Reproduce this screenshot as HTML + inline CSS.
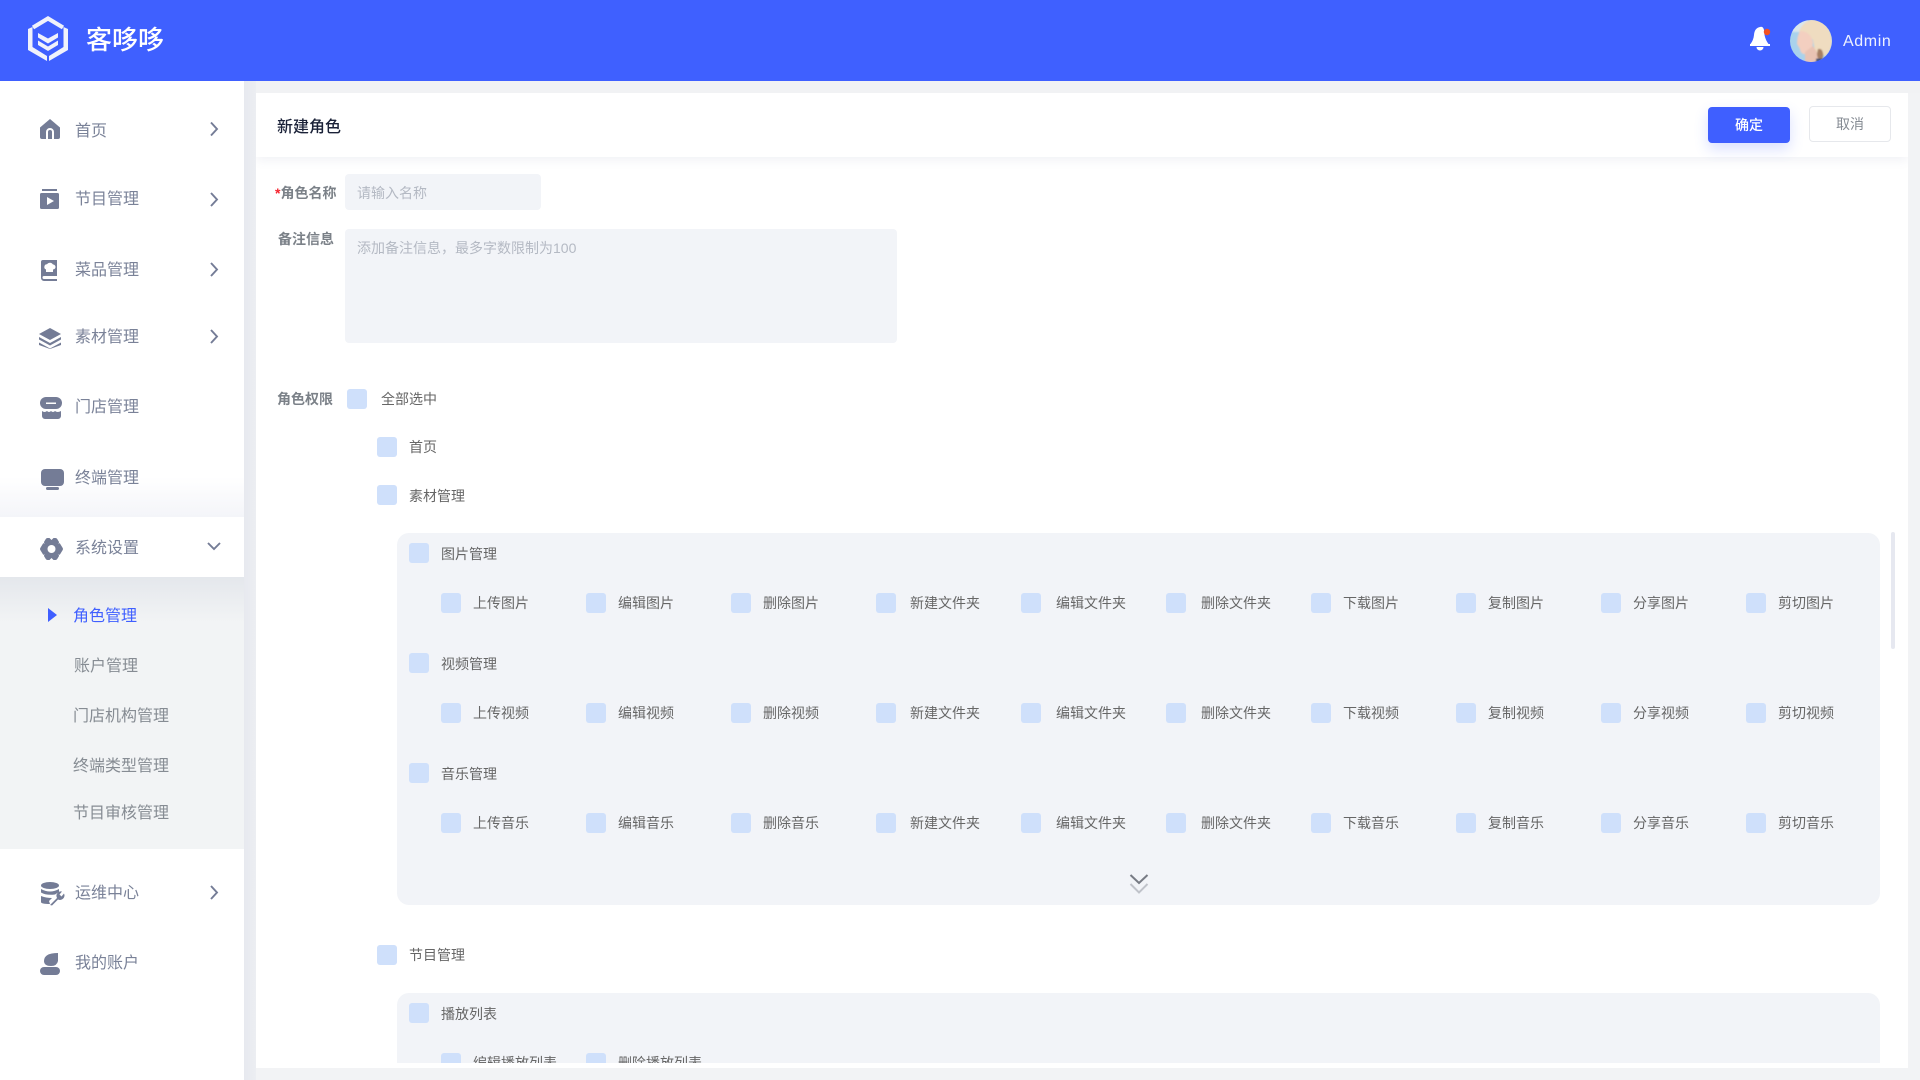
<!DOCTYPE html>
<html lang="zh-CN"><head><meta charset="utf-8"><title>新建角色</title>
<style>
*{box-sizing:border-box;margin:0;padding:0}
html,body{width:1920px;height:1080px;overflow:hidden;background:#f2f3f5;font-family:"Liberation Sans","Noto Sans CJK SC",sans-serif;font-size:14px;color:#666}
.a{position:absolute}
#hd{left:0;top:0;width:1920px;height:81px;background:#3f60ff;z-index:5}
#side{left:0;top:81px;width:244px;height:999px;background:#fff;z-index:3;overflow:hidden}
#strip{left:244px;top:81px;width:12px;height:999px;background:linear-gradient(90deg,#e7e9ef,#eceef2);z-index:1}
#topstrip{left:256px;top:81px;width:1664px;height:12px;background:#f1f2f4}
#card{left:256px;top:93px;width:1652px;height:975px;background:#fff;overflow:hidden;z-index:2}
#tb{left:0;top:0;width:1652px;height:64px;background:#fff;box-shadow:0 3px 10px rgba(90,100,140,.09)}
.nav{position:absolute;left:75px;font-size:16px;line-height:24px;color:#7a8298;white-space:nowrap}
.sub{position:absolute;left:73px;font-size:16px;line-height:24px;color:#868c93;white-space:nowrap}
.ic{position:absolute;left:0;top:0;overflow:visible}
.cb{display:block;position:absolute;width:20px;height:20px;background:#cfe0fb;border-radius:3px}
.t{position:absolute;line-height:20px;white-space:nowrap;color:#666}
.lb{position:absolute;line-height:20px;font-weight:700;color:#7b8188;white-space:nowrap}
.p{position:absolute;background:#f2f4f8;border-radius:12px}
.r{position:absolute;left:44px;display:flex;height:20px}
.r div{position:relative;width:145px;height:20px;flex:none}
.r i{display:block;width:20px;height:20px;background:#cfe0fb;border-radius:3px}
.r span{position:absolute;left:32px;top:0;line-height:20px;white-space:nowrap;color:#666}
.r span.f1{left:34px}
.r span.f2{left:35px}
</style></head><body>

<div id="hd" class="a">
<svg class="ic" width="1920" height="81">
<path d="M33 27.500 L48 18.500 L63 27.500" fill="none" stroke="#f0f2fb" stroke-width="4.200"/>
<path d="M28 29 L32.500 27 V47 L47 56 V61 L28 50Z M68 29 L63.500 27 V47 L49 56 V61 L68 50Z" fill="#f0f2fb"/>
<path d="M38 33 L48 38.500 L58 33 V37.500 L48 43.500 L38 37.500Z M38 40.500 L48 46.500 L58 40.500 V45 L48 51 L38 45Z" fill="#f0f2fb"/>
<path d="M1760 27 q3 -1 4 3 l.5 5 q1 5 4 9 H1750.500 q3 -4 3.500 -9 q.5 -7 6 -8Z" fill="#fff"/>
<rect x="1750" y="44" width="20" height="2" fill="#fff"/>
<path d="M1756.500 47 h7 a3.500 3.500 0 0 1 -7 0Z" fill="#fff"/>
<circle cx="1767" cy="32" r="3.200" fill="#f4511e"/>
<defs>
<clipPath id="av"><circle cx="1811" cy="41" r="21"/></clipPath>
<filter id="bl" x="-10%" y="-10%" width="120%" height="120%"><feGaussianBlur stdDeviation=".7"/></filter>
</defs>
<g clip-path="url(#av)">
<rect x="1790" y="20" width="42" height="42" fill="#a9d2ec"/>
<g filter="url(#bl)">
<rect x="1790" y="20" width="18" height="12" fill="#d9e6ec"/>
<path d="M1799 31 Q1804 20 1815 19 Q1831 23 1832 42 Q1831 52 1825 56 L1815 52 L1813 40 Q1806 32 1799 31Z" fill="#efdcc0"/>
<path d="M1800 31 Q1810 31 1813 42 Q1813 50 1808 54 L1803 54 Q1800 52 1800 49 L1797 44 Q1797 36 1800 31Z" fill="#f3cfc0"/>
<path d="M1805 52 L1813 46 L1818 54 L1820 63 H1805Z" fill="#e9c3b4"/>
<path d="M1818 49 q4 -1 5 4 q1 4 -2 7 q-4 -1 -4 -6Z" fill="#a67f64"/>
<rect x="1816" y="58.500" width="10" height="5" fill="#36517e"/>
</g>
</g>
</svg>
<div class="a" style="left:86px;top:22px;font-size:26px;line-height:36px;font-weight:500;color:#fff;white-space:nowrap">客哆哆</div>
<div class="a" style="left:1843px;top:30px;font-size:16px;line-height:24px;letter-spacing:.6px;color:#eef1ff;white-space:nowrap">Admin</div>
</div>

<div id="strip" class="a"></div>
<div id="topstrip" class="a"></div>

<div id="side" class="a">
<div class="a" style="left:0;top:396px;width:244px;height:40px;background:linear-gradient(180deg,#fff,#f4f5f9)"></div>
<div class="a" style="left:0;top:496px;width:244px;height:272px;background:linear-gradient(180deg,#e4e7ec 0,#f2f4f5 46px,#f2f4f5 100%)"></div>
<div class="a" style="left:0;top:436px;width:244px;height:60px;background:#fff"></div>
</div>

<div class="a" style="left:0;top:0;width:244px;height:1080px;z-index:4">
<svg class="ic" width="244" height="1080" fill="#747c96">
<path d="M50 119 L60 127.500 V137 a2 2 0 0 1 -2 2 H42 a2 2 0 0 1 -2 -2 V127.500Z"/>
<path d="M47 139 V132 a3 3 0 0 1 6 0 V139" fill="none" stroke="#fff" stroke-width="2"/>

<rect x="42" y="189" width="15" height="2"/>
<rect x="40" y="193" width="19" height="16" rx="1.500"/>
<path d="M47 197 L54 201 L47 205Z" fill="#fff"/>

<path d="M43 260 H57 V276 H44 a1.500 1.500 0 0 0 0 3 H57 V281 H44 a3 3 0 0 1 -3 -3 V262 a2 2 0 0 1 2 -2Z"/>
<path d="M46 272 H53 V269.500 a2.500 2.500 0 0 0 0 -5 a3.500 3.500 0 0 0 -6 -.2 a2.700 2.700 0 0 0 -1 5.200Z" fill="#fff"/>

<path d="M50 328 L61 334 L50 340 L39 334Z"/>
<path d="M39 338.500 L50 344.500 L61 338.500 V341 L50 347 L39 341Z" transform="translate(0,-1.500)"/>
<path d="M39 342.500 L50 348.500 L61 342.500 V345 L50 349 L39 345Z"/>

<path d="M46 397 H56 a6 6 0 0 1 0 12 H46 a6 6 0 0 1 0 -12Z"/>
<rect x="46" y="402.500" width="10" height="1.500" fill="#fff"/>
<path d="M42 411 q2.500 2 5 0 q2 2 4 0 q2 2 4 0 q2.500 2 6 0 V416 a3 3 0 0 1 -3 3 H45 a3 3 0 0 1 -3 -3Z"/>

<rect x="41" y="469" width="23" height="17" rx="4"/>
<rect x="46" y="487" width="13" height="3" rx="1.500"/>

<path d="M42 549 L47.500 540 H55.500 L61 549 L55.500 558 H47.500Z" stroke="#747c96" stroke-width="4" stroke-linejoin="round"/>
<path d="M49.500 538 L51.500 540 L53.500 538Z M49.500 560 L51.500 558 L53.500 560Z M41.500 541.500 L44.500 544 L43.500 540.500Z M61.500 541.500 L58.500 544 L59.500 540.500Z M41.500 556.500 L44.500 554 L43.500 557.500Z M61.500 556.500 L58.500 554 L59.500 557.500Z" fill="#fff"/>
<circle cx="51.500" cy="549" r="4" fill="#fff"/>

<ellipse cx="50" cy="885.500" rx="9" ry="3.500"/>
<path d="M41 889 q9 5 18 0 v3 l-4 2.500 q-9 1 -14 -2Z"/>
<path d="M41 896 q5 2 11 2 l-3 3 l1 3 q-9 0 -9 -2Z"/>
<path d="M50 905 l7 -7 a4.500 4.500 0 0 1 5 -6.500 l-2.500 3 l2 2 l2.500 -3 a4.500 4.500 0 0 1 -6 6 l-6 6Z"/>

<path d="M44 961 q0 -8 14 -8 v8 q-1 5 -7 5 q-7 0 -7 -5Z"/>
<rect x="40" y="967" width="20" height="8" rx="4"/>

<g fill="none" stroke="#747c96" stroke-width="1.900">
<path d="M211 122.500 L217 129 L211 135.500"/>
<path d="M211 193 L217 199.500 L211 206"/>
<path d="M211 263 L217 269.500 L211 276"/>
<path d="M211 330 L217 336.500 L211 343"/>
<path d="M211 886 L217 892.500 L211 899"/>
<path d="M208 543 L214 549 L220 543"/>
</g>
<path d="M48 608 L57 615 L48 622Z" fill="#3f5fff"/>
</svg>
<div class="nav" style="top:120px">首页</div>
<div class="nav" style="top:188px">节目管理</div>
<div class="nav" style="top:259px">菜品管理</div>
<div class="nav" style="top:326px">素材管理</div>
<div class="nav" style="top:396px">门店管理</div>
<div class="nav" style="top:467px">终端管理</div>
<div class="nav" style="top:537px">系统设置</div>
<div class="sub" style="top:605px;color:#3f5fff">角色管理</div>
<div class="sub" style="top:655px;left:74px">账户管理</div>
<div class="sub" style="top:705px">门店机构管理</div>
<div class="sub" style="top:755px">终端类型管理</div>
<div class="sub" style="top:802px">节目审核管理</div>
<div class="nav" style="top:882px">运维中心</div>
<div class="nav" style="top:952px">我的账户</div>
</div>

<div id="card" class="a">
<div id="tb" class="a">
<div class="a" style="left:21px;top:23px;font-size:16px;line-height:24px;font-weight:500;color:#1b2238;white-space:nowrap">新建角色</div>
<div class="a" style="left:1452px;top:14px;width:82px;height:36px;background:#3f5fff;border-radius:4px;color:#fff;line-height:36px;text-align:center;font-weight:500;box-shadow:0 6px 14px rgba(63,95,255,.2)">确定</div>
<div class="a" style="left:1553px;top:13px;width:82px;height:36px;background:#fff;border:1px solid #e6e8ec;border-radius:4px;color:#858b93;line-height:34px;text-align:center">取消</div>
</div>

<div class="lb" style="left:19px;top:90px"><span style="color:#f5222d">*</span>角色名称</div>
<div class="a" style="left:89px;top:81px;width:196px;height:36px;background:#f2f4f8;border-radius:4px;color:#b4b9c3;line-height:38px;padding-left:12px">请输入名称</div>
<div class="lb" style="left:22px;top:136px">备注信息</div>
<div class="a" style="left:89px;top:136px;width:552px;height:114px;background:#f2f4f8;border-radius:4px;color:#b4b9c3;line-height:20px;padding:9px 12px">添加备注信息，最多字数限制为100</div>

<div class="lb" style="left:21px;top:296px">角色权限</div>
<i class="cb" style="left:91px;top:296px"></i><span class="t" style="left:125px;top:296px">全部选中</span>
<i class="cb" style="left:121px;top:344px"></i><span class="t" style="left:153px;top:344px">首页</span>
<i class="cb" style="left:121px;top:392px"></i><span class="t" style="left:153px;top:393px">素材管理</span>

<div class="p" style="left:141px;top:440px;width:1483px;height:372px">
<i class="cb" style="left:12px;top:10px"></i><span class="t" style="left:44px;top:11px">图片管理</span>
<div class="r" style="top:60px">
<div><i></i><span>上传图片</span></div><div><i></i><span>编辑图片</span></div><div><i></i><span>删除图片</span></div><div><i></i><span class="f1">新建文件夹</span></div><div><i></i><span class="f2">编辑文件夹</span></div><div><i></i><span class="f2">删除文件夹</span></div><div><i></i><span>下载图片</span></div><div><i></i><span>复制图片</span></div><div><i></i><span>分享图片</span></div><div><i></i><span>剪切图片</span></div>
</div>
<i class="cb" style="left:12px;top:120px"></i><span class="t" style="left:44px;top:121px">视频管理</span>
<div class="r" style="top:170px">
<div><i></i><span>上传视频</span></div><div><i></i><span>编辑视频</span></div><div><i></i><span>删除视频</span></div><div><i></i><span class="f1">新建文件夹</span></div><div><i></i><span class="f2">编辑文件夹</span></div><div><i></i><span class="f2">删除文件夹</span></div><div><i></i><span>下载视频</span></div><div><i></i><span>复制视频</span></div><div><i></i><span>分享视频</span></div><div><i></i><span>剪切视频</span></div>
</div>
<i class="cb" style="left:12px;top:230px"></i><span class="t" style="left:44px;top:231px">音乐管理</span>
<div class="r" style="top:280px">
<div><i></i><span>上传音乐</span></div><div><i></i><span>编辑音乐</span></div><div><i></i><span>删除音乐</span></div><div><i></i><span class="f1">新建文件夹</span></div><div><i></i><span class="f2">编辑文件夹</span></div><div><i></i><span class="f2">删除文件夹</span></div><div><i></i><span>下载音乐</span></div><div><i></i><span>复制音乐</span></div><div><i></i><span>分享音乐</span></div><div><i></i><span>剪切音乐</span></div>
</div>
<svg class="a" style="left:732px;top:340px" width="20" height="22" fill="none" stroke-width="2">
<path d="M1.500 2 L10 10 L18.500 2" stroke="#777b84"/>
<path d="M1.500 11 L10 19.500 L18.500 11" stroke="#c0c3ca"/>
</svg>
</div>

<i class="cb" style="left:121px;top:852px"></i><span class="t" style="left:153px;top:852px">节目管理</span>

<div class="p" style="left:141px;top:900px;width:1483px;height:70px;overflow:hidden;border-radius:12px 12px 0 0">
<i class="cb" style="left:12px;top:10px"></i><span class="t" style="left:44px;top:11px">播放列表</span>
<div class="r" style="top:60px"><div><i></i><span>编辑播放列表</span></div><div><i></i><span>删除播放列表</span></div></div>
</div>

<div class="a" style="left:1635px;top:439px;width:4px;height:117px;background:#e6e8f0;border-radius:2px"></div>
</div>
</body></html>
